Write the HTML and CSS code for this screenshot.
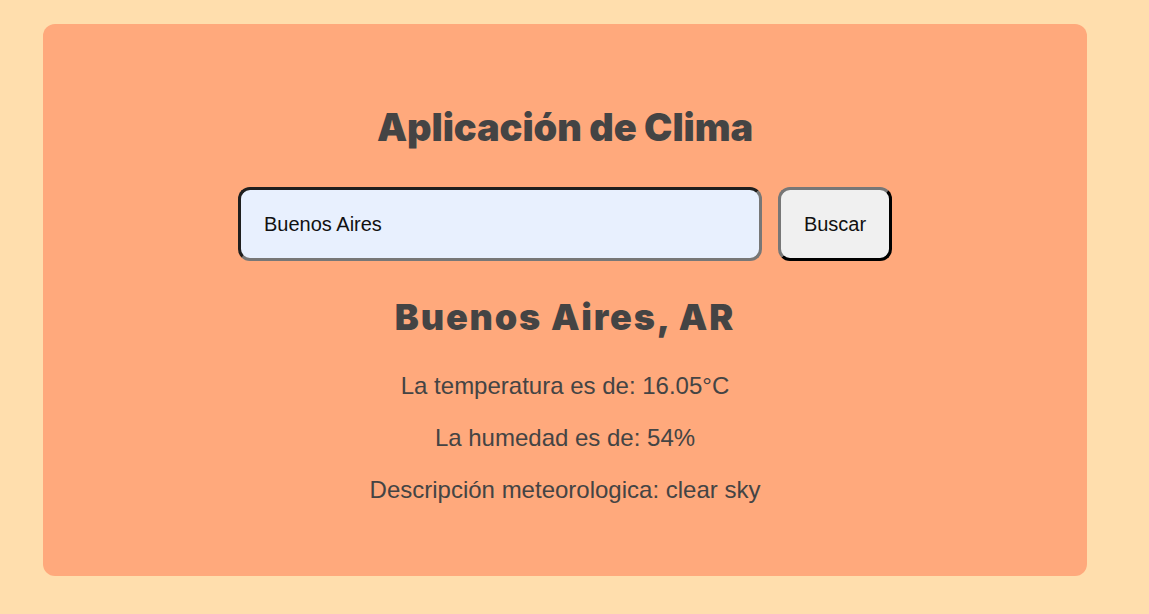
FILE: index.html
```html
<!DOCTYPE html>
<html lang="es">
<head>
<meta charset="utf-8">
<title>Aplicación de Clima</title>
<link rel="stylesheet" href="styles.css">
</head>
<body>
<main class="page">
  <section class="card">
    <h1 class="title">Aplicación de Clima</h1>
    <form class="search">
      <input class="search-input" type="text" value="Buenos Aires">
      <button class="search-btn" type="button">Buscar</button>
    </form>
    <div class="result">
      <h2 class="city">Buenos Aires, AR</h2>
      <p class="info">La temperatura es de: 16.05°C</p>
      <p class="info">La humedad es de: 54%</p>
      <p class="info">Descripción meteorologica: clear sky</p>
    </div>
  </section>
</main>
</body>
</html>
```
FILE: styles.css
```css
html, body {
  margin: 0;
  padding: 0;
}
body {
  background: #FFDEAD;
  font-family: "Liberation Sans", Arial, sans-serif;
  color: #444;
}
.page {
  padding: 24px 62px 38px 43px;
}
.card {
  background: #FFA97C;
  border-radius: 12px;
  height: 552px;
  box-sizing: border-box;
  padding-top: 78px;
  display: flex;
  flex-direction: column;
  align-items: center;
}
.title {
  margin: 0;
  font-family: Inter, "Noto Sans", sans-serif;
  font-weight: 900;
  font-size: 38px;
  line-height: 50px;
  color: #444;
  letter-spacing: -0.1px;
}
.search {
  margin-top: 35px;
  display: flex;
  gap: 16px;
}
.search-input {
  width: 524px;
  height: 74px;
  box-sizing: border-box;
  border: 3px solid;
  border-color: #1f1f1f #777 #777 #1f1f1f;
  border-radius: 12px;
  background: #E8F0FE;
  padding: 0 23px;
  font-family: "Liberation Sans", Arial, sans-serif;
  font-size: 20px;
  color: #111;
  outline: none;
}
.search-btn {
  width: 114px;
  height: 74px;
  box-sizing: border-box;
  border: 3px solid;
  border-color: #777 #000 #000 #777;
  border-radius: 12px;
  background: #F0F0F0;
  font-family: "Liberation Sans", Arial, sans-serif;
  font-size: 20px;
  color: #111;
  padding: 0;
}
.result {
  margin-top: 34px;
  display: flex;
  flex-direction: column;
  align-items: center;
}
.city {
  margin: 0 0 21px;
  font-family: Inter, "DejaVu Sans", sans-serif;
  font-weight: 900;
  font-size: 36px;
  line-height: 44px;
  letter-spacing: 1.8px;
  color: #444;
}
.info {
  margin: 0;
  font-size: 24px;
  line-height: 52px;
  color: #444;
}
```
